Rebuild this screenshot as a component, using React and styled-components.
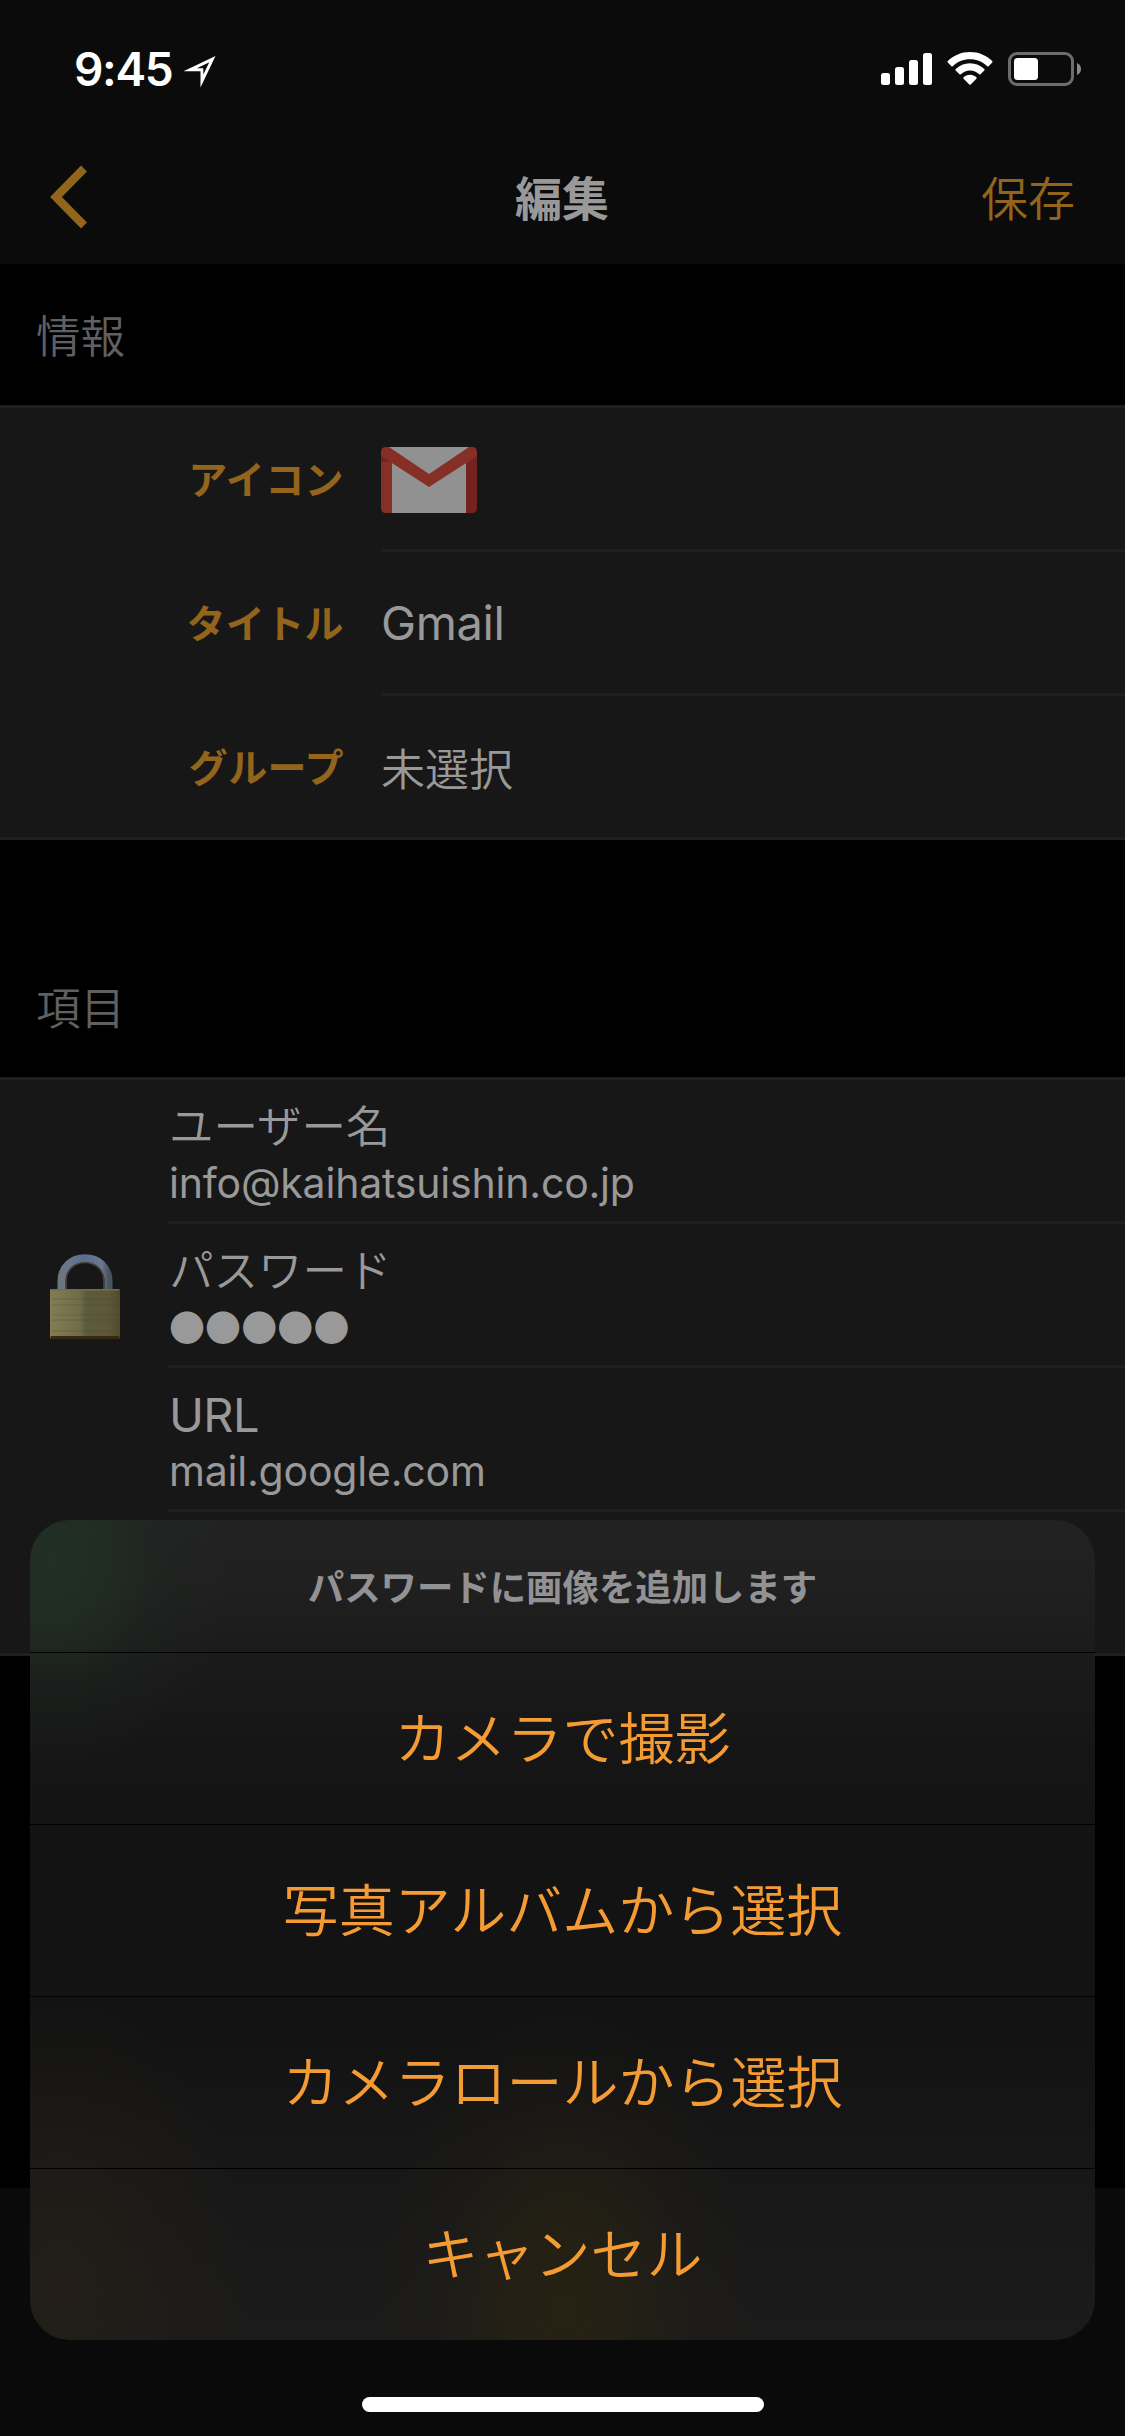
import React from 'react';
import styled, { createGlobalStyle } from 'styled-components';

const GlobalStyle = createGlobalStyle`
  * {
    box-sizing: border-box;
  }

  body {
    margin: 0;
    background: #000;
    font-family: Inter, 'Noto Sans CJK JP', sans-serif;
    color: #999;
  }
`;

const Screen = styled.div`
  position: relative;
  width: 1125px;
  height: 2436px;
  display: flex;
  flex-direction: column;
  background: #000;
  overflow: hidden;
`;

const Header = styled.header`
  height: 264px;
  background: #0b0b0b;
`;

const StatusBar = styled.div`
  height: 132px;
  padding: 40px 44px 0 74px;
  display: flex;
  justify-content: space-between;
  align-items: flex-start;
`;

const Clock = styled.div`
  display: flex;
  align-items: flex-start;
  color: #fff;
  font-size: 46px;
  font-weight: 600;
  line-height: 58px;
  letter-spacing: -1.3px;

  svg {
    margin: 16px 0 0 11px;
  }
`;

const StatusIcons = styled.div`
  display: flex;
  align-items: flex-start;
  padding-top: 12px;
  gap: 15px;
`;

const NavBar = styled.div`
  height: 132px;
  padding: 2px 50px 0 49px;
  display: grid;
  grid-template-columns: 1fr auto 1fr;
  align-items: center;
`;

const BackButton = styled.button`
  display: flex;
  padding: 0 0 5px;
  background: none;
  border: none;
`;

const NavTitle = styled.h1`
  margin: 0;
  font-size: 47px;
  font-weight: 700;
  line-height: 60px;
`;

const SaveButton = styled.button`
  justify-self: end;
  padding: 0;
  background: none;
  border: none;
  font-family: inherit;
  font-size: 47px;
  font-weight: 350;
  line-height: 60px;
  color: #93641c;
`;

const SectionTitle = styled.h2`
  margin: 0;
  height: ${(props) => props.$height}px;
  padding: 0 36px 36px;
  display: flex;
  align-items: flex-end;
  font-size: 44.5px;
  font-weight: 350;
  line-height: 64px;
  color: #606063;
`;

const Group = styled.section`
  display: flex;
  background: #171717;
  border-top: 3px solid #1f1f1f;
  border-bottom: 3px solid #1f1f1f;
`;

const Rows = styled.div`
  flex: 1;
`;

const InfoRow = styled.div`
  height: ${(props) => (props.$last ? 141 : 144)}px;
  display: flex;
`;

const InfoLabel = styled.div`
  width: 381px;
  padding: 0 37px 0 0;
  text-align: right;
  font-size: 39px;
  font-weight: 700;
  line-height: 144px;
  letter-spacing: 0.4px;
  color: #93641c;
`;

const InfoValue = styled.div`
  flex: 1;
  padding-top: ${(props) => props.$offset || 0}px;
  display: flex;
  align-items: center;
  border-bottom: ${(props) => (props.$last ? 'none' : '3px solid #1f1f1f')};
  font-size: ${(props) => (props.$latin ? 47 : 44)}px;
  font-weight: ${(props) => (props.$latin ? 400 : 350)};
  letter-spacing: ${(props) => (props.$latin ? -0.4 : 0)}px;
`;

const IconCell = styled.div`
  width: 168px;
  padding: 174px 0 0 50px;
`;

const FieldRow = styled.div`
  height: ${(props) => (props.$last ? 141 : 144)}px;
  padding: 16px 0 0 1px;
  border-bottom: ${(props) => (props.$last ? 'none' : '3px solid #1f1f1f')};
`;

const FieldName = styled.div`
  font-size: ${(props) => (props.$latin ? 47 : 44.5)}px;
  font-weight: ${(props) => (props.$latin ? 400 : 350)};
  letter-spacing: ${(props) => (props.$latin ? -0.6 : 0)}px;
  line-height: 62px;
`;

const FieldValue = styled.div`
  font-size: 41px;
  font-weight: 380;
  line-height: 51px;
  letter-spacing: -0.2px;
`;

const Secret = styled(FieldValue)`
  font-family: 'Noto Sans CJK JP', sans-serif;
  font-size: 36px;
  line-height: 49px;
  letter-spacing: 0.1px;
`;

const Footer = styled.footer`
  height: 248px;
  margin-top: auto;
  padding-bottom: 24px;
  display: flex;
  justify-content: center;
  align-items: flex-end;
  background: #0a0a0a;
`;

const HomeIndicator = styled.div`
  width: 402px;
  height: 15px;
  border-radius: 8px;
  background: #fff;
`;

const Sheet = styled.div`
  position: absolute;
  left: 30px;
  top: 1520px;
  width: 1065px;
  height: 820px;
  border-radius: 40px;
  overflow: hidden;
  background:
    radial-gradient(ellipse 180px 210px at 20px 40px, rgba(33, 49, 36, 0.95) 0, rgba(33, 47, 35, 0.8) 28%, rgba(32, 42, 34, 0.3) 62%, rgba(32, 38, 33, 0) 100%),
    radial-gradient(ellipse 190px 300px at 535px 790px, rgba(39, 34, 17, 0.95) 0, rgba(38, 33, 19, 0.7) 35%, rgba(36, 31, 20, 0.25) 68%, rgba(36, 31, 20, 0) 100%),
    radial-gradient(ellipse 190px 290px at 30px 770px, rgba(36, 31, 23, 0.85) 0, rgba(36, 31, 23, 0.45) 45%, rgba(36, 31, 23, 0) 100%),
    linear-gradient(#222223 0, #202020 60px, #1b1b1b 130px, #161616 220px, #131313 320px, #131313 520px, #171717 640px, #1a1a1a 760px, #1b1b1b 820px);
`;

const SheetTitle = styled.div`
  height: 132px;
  padding-top: 2px;
  text-align: center;
  font-size: 36.4px;
  font-weight: 700;
  line-height: 132px;
  color: #929294;
`;

const SheetAction = styled.button`
  display: block;
  width: 100%;
  height: 172px;
  padding: 2px 0 0;
  background: none;
  border: none;
  border-top: 1px solid #000;
  font-family: inherit;
  font-size: 56px;
  font-weight: 350;
  line-height: 169px;
  color: #f59b33;
`;

const LocationArrow = () => (
  <svg width="33" height="32" viewBox="0 0 33 32">
    <path
      d="M0.5 15.2 L32.5 0 L17.5 31.5 V15.2 Z M14 12.3 H20.3 V18.5 L26.3 6.3 Z"
      fill="#fff"
      fillRule="evenodd"
    />
  </svg>
);

const SignalIcon = () => (
  <svg width="51" height="34" viewBox="0 0 51 34" fill="#fff">
    <rect x="0" y="21" width="9" height="12" rx="2.5" />
    <rect x="14" y="15" width="9" height="18" rx="2.5" />
    <rect x="28" y="8" width="9" height="25" rx="2.5" />
    <rect x="42" y="1" width="9" height="32" rx="2.5" />
  </svg>
);

const WifiIcon = () => (
  <svg width="46" height="34" viewBox="0 0 46 34" fill="#fff">
    <path d="M23 0 C31.6 0 39.5 3.4 45.2 9 Q46 9.8 45.2 10.6 L41.6 14.2 Q41 14.8 40.3 14.2 C35.7 9.8 29.6 7.2 23 7.2 C16.4 7.2 10.3 9.8 5.7 14.2 Q5 14.8 4.4 14.2 L0.8 10.6 Q0 9.8 0.8 9 C6.5 3.4 14.4 0 23 0 Z" />
    <path d="M23 11.3 C28.6 11.3 33.6 13.5 37.3 17.1 Q38 17.8 37.3 18.5 L33.5 22.3 Q32.8 22.9 32.1 22.3 C29.7 20 26.5 18.5 23 18.5 C19.5 18.5 16.3 20 13.9 22.3 Q13.2 22.9 12.5 22.3 L8.7 18.5 Q8 17.8 8.7 17.1 C12.4 13.5 17.4 11.3 23 11.3 Z" />
    <path d="M23 22.8 C25.6 22.8 27.8 23.7 29.4 25.3 Q30.1 26 29.4 26.7 L23.7 32.5 Q23 33.2 22.3 32.5 L16.6 26.7 Q15.9 26 16.6 25.3 C18.2 23.7 20.4 22.8 23 22.8 Z" />
  </svg>
);

const BatteryIcon = () => (
  <svg width="73" height="34" viewBox="0 0 73 34">
    <rect x="1.5" y="1.5" width="63" height="31" rx="7.5" fill="none" stroke="#6d6d6d" strokeWidth="3" />
    <rect x="6" y="6" width="24" height="22" rx="3.5" fill="#fff" />
    <path d="M69 11 C71.5 12 73 14.3 73 17 C73 19.7 71.5 22 69 23 Z" fill="#8a8a8a" />
  </svg>
);

const BackIcon = () => (
  <svg width="38" height="64" viewBox="0 0 38 64">
    <path d="M35 3.5 L7 32 L35 60.5" fill="none" stroke="#93641c" strokeWidth="8.4" />
  </svg>
);

const GmailIcon = () => (
  <svg width="96" height="66" viewBox="0 0 96 66">
    <path d="M5 0 H91 V66 H5 Z" fill="#919191" />
    <path d="M0 8 L11 16 V66 H5 Q0 66 0 61 Z" fill="#862f27" />
    <path d="M96 8 L85 16 V66 H91 Q96 66 96 61 Z" fill="#75231f" />
    <path d="M5 0 H8 L48 27 L88 0 H91 Q96 0 96 5 V9 L48 40 L0 9 V5 Q0 0 5 0 Z" fill="#862f27" />
    <path d="M0 9 L9 15 L0 14.5 Z" fill="#75231f" />
  </svg>
);

const LockIcon = () => (
  <svg width="70" height="86" viewBox="0 0 70 86">
    <defs>
      <linearGradient id="brass">
        <stop offset="0" stopColor="#827d53" />
        <stop offset="0.42" stopColor="#716d47" />
        <stop offset="0.52" stopColor="#5c5b3b" />
        <stop offset="0.85" stopColor="#5c5837" />
        <stop offset="1" stopColor="#51492a" />
      </linearGradient>
      <linearGradient id="steel">
        <stop offset="0" stopColor="#6c7680" />
        <stop offset="0.15" stopColor="#67778f" />
        <stop offset="0.5" stopColor="#5a6d8c" />
        <stop offset="0.85" stopColor="#6b7991" />
        <stop offset="1" stopColor="#4b535c" />
      </linearGradient>
    </defs>
    <path
      d="M11.5 37 V27 C11.5 13 22 4.3 35 4.3 C48 4.3 58.5 13 58.5 27 V37"
      fill="none"
      stroke="url(#steel)"
      strokeWidth="8"
    />
    <path d="M16.2 36 V27 C16.2 15.5 25 8.7 35 8.7 C45 8.7 53.8 15.5 53.8 27 V36" fill="none" stroke="#4c4738" strokeWidth="1.2" />
    <rect x="0" y="35" width="70" height="50" rx="1" fill="url(#brass)" />
    <path d="M1 35.8 H69" stroke="#6d6e55" strokeWidth="1.5" />
    <path d="M2 45 H68 M2 51 H68 M2 61 H68 M2 66 H68 M2 77 H68" stroke="#4b4626" strokeOpacity="0.3" />
    <path d="M1 82 H69 L70 85 H0 Z" fill="#362b12" />
  </svg>
);

const actions = ['カメラで撮影', '写真アルバムから選択', 'カメラロールから選択', 'キャンセル'];

const App = () => {
  return (
    <Screen>
      <GlobalStyle />
      <Header>
        <StatusBar>
          <Clock>
            9:45
            <LocationArrow />
          </Clock>
          <StatusIcons>
            <SignalIcon />
            <WifiIcon />
            <BatteryIcon />
          </StatusIcons>
        </StatusBar>
        <NavBar>
          <BackButton>
            <BackIcon />
          </BackButton>
          <NavTitle>編集</NavTitle>
          <SaveButton>保存</SaveButton>
        </NavBar>
      </Header>

      <SectionTitle $height={141}>情報</SectionTitle>
      <Group>
        <Rows>
          <InfoRow>
            <InfoLabel>アイコン</InfoLabel>
            <InfoValue $offset={3}>
              <GmailIcon />
            </InfoValue>
          </InfoRow>
          <InfoRow>
            <InfoLabel>タイトル</InfoLabel>
            <InfoValue $latin>Gmail</InfoValue>
          </InfoRow>
          <InfoRow $last>
            <InfoLabel>グループ</InfoLabel>
            <InfoValue $last>未選択</InfoValue>
          </InfoRow>
        </Rows>
      </Group>

      <SectionTitle $height={237}>項目</SectionTitle>
      <Group>
        <IconCell>
          <LockIcon />
        </IconCell>
        <Rows>
          <FieldRow>
            <FieldName>ユーザー名</FieldName>
            <FieldValue>info@kaihatsuishin.co.jp</FieldValue>
          </FieldRow>
          <FieldRow>
            <FieldName>パスワード</FieldName>
            <Secret>●●●●●</Secret>
          </FieldRow>
          <FieldRow>
            <FieldName $latin>URL</FieldName>
            <FieldValue>mail.google.com</FieldValue>
          </FieldRow>
          <FieldRow $last />
        </Rows>
      </Group>

      <Footer>
        <HomeIndicator />
      </Footer>

      <Sheet>
        <SheetTitle>パスワードに画像を追加します</SheetTitle>
        {actions.map((action) => (
          <SheetAction key={action}>{action}</SheetAction>
        ))}
      </Sheet>
    </Screen>
  );
};

export default App;
